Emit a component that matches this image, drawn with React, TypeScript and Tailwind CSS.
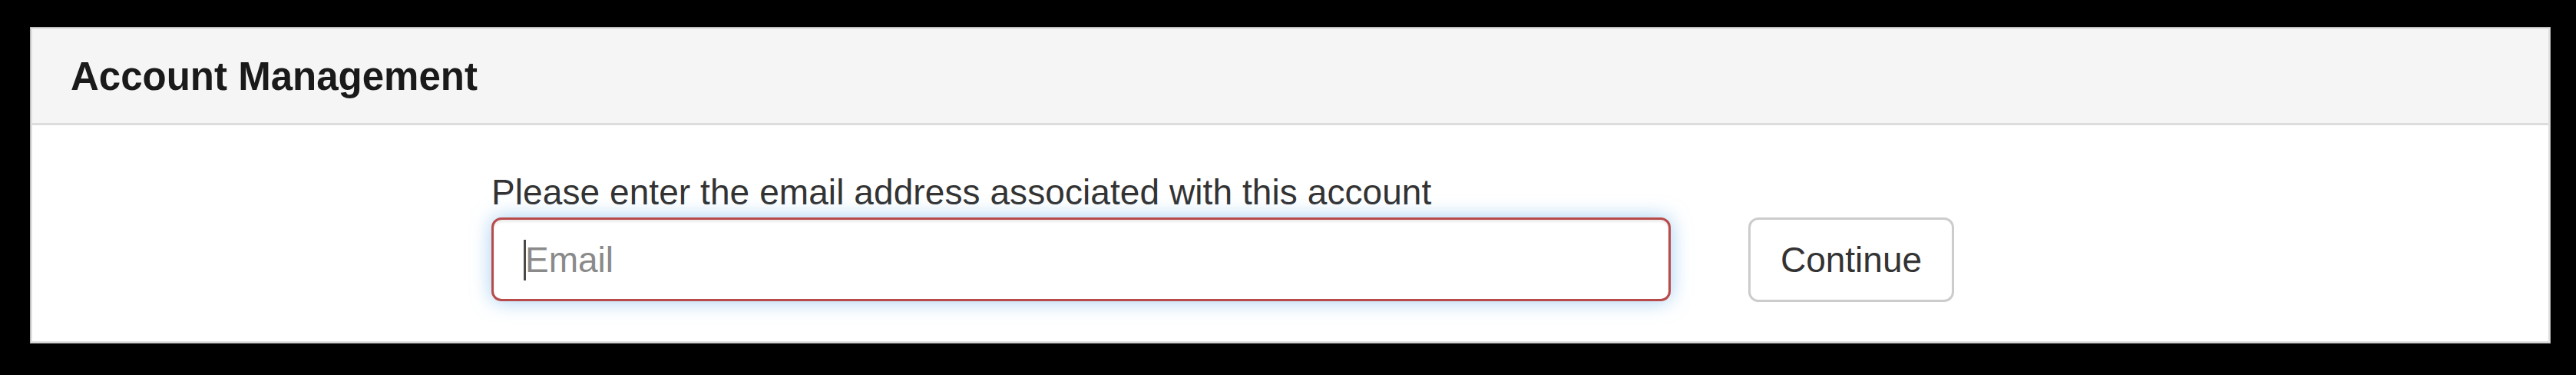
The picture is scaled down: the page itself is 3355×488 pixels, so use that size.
import React from "react";

export default function App() {
  return (
    <div
      className="w-[3355px] h-[488px] bg-black pt-[35px] pl-[39px]"
      style={{ fontFamily: '"Liberation Sans", Arial, Helvetica, sans-serif' }}
    >
      <div className="w-[3283px] h-[412px] border border-[#b3b3b3] flex flex-col">
        <div className="flex-1 flex flex-col border-[2px] border-[#dfdfdf] bg-white">
          <div className="h-[125px] flex items-center pl-[50px] bg-[#f5f5f5] border-b-[3px] border-[#dddddd]">
            <h3 className="text-[51px] font-bold text-[#1a1a1a] leading-none">
              Account Management
            </h3>
          </div>
          <div className="flex-1 pl-[598px] pt-[55px]">
            <p className="text-[46px] leading-[64px] tracking-[0.08px] text-[#333333]">
              Please enter the email address associated with this account
            </p>
            <div className="flex items-start gap-[101px] mt-[1px]">
              <div className="relative w-[1536px] h-[109px]">
                <input
                  type="email"
                  placeholder="Email"
                  className="w-full h-full rounded-[13px] border-[3px] border-[#b94a4a] bg-white pl-[41px] pr-[38px] text-[46px] text-[#555555] placeholder:text-[#8a8a8a] caret-transparent outline-none shadow-[inset_0_3px_3px_rgba(0,0,0,0.075),0_0_26px_rgba(102,175,233,0.6)]"
                  style={{ fontFamily: '"Liberation Sans", Arial, Helvetica, sans-serif' }}
                />
                <span className="absolute left-[42px] top-[29px] w-[3px] h-[53px] bg-[#4a4a4a]" />
              </div>
              <button
                type="button"
                className="w-[268px] h-[110px] rounded-[13px] border-[3px] border-[#cccccc] bg-white text-[46px] text-[#333333] flex items-center justify-center"
                style={{ fontFamily: '"Liberation Sans", Arial, Helvetica, sans-serif' }}
              >
                Continue
              </button>
            </div>
          </div>
        </div>
      </div>
    </div>
  );
}
